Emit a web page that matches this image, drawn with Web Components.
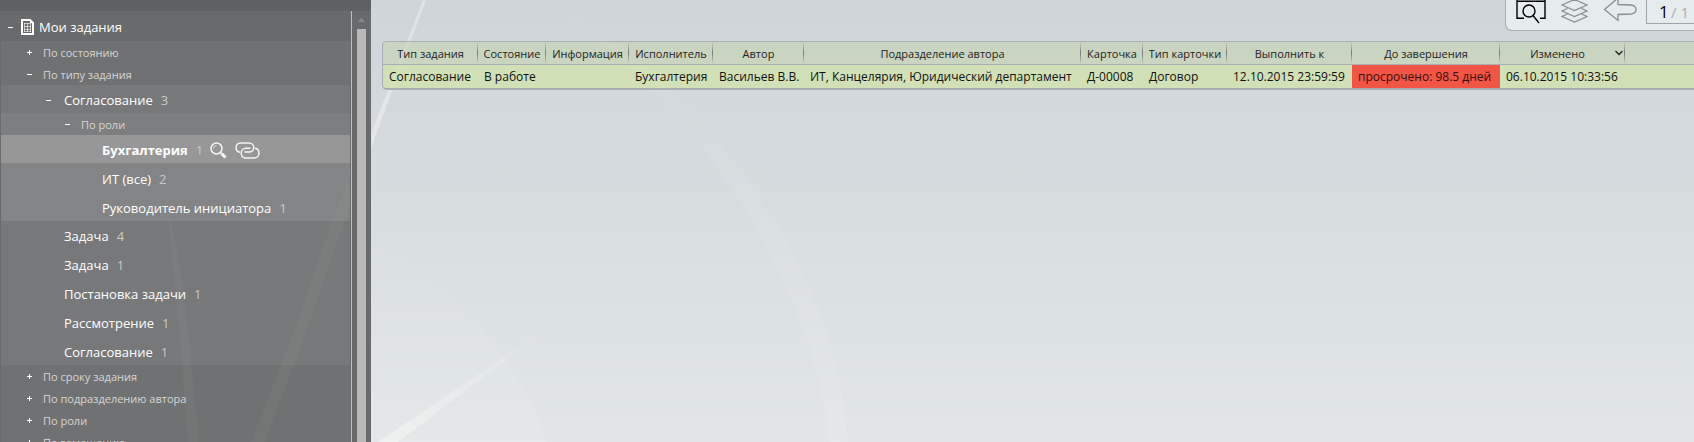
<!DOCTYPE html>
<html lang="ru">
<head>
<meta charset="utf-8">
<title>Мои задания</title>
<style>
  body {
    margin: 0;
    height: 100vh;
    overflow: hidden;
    font-family: "Open Sans", "Noto Sans", sans-serif;
    font-size: 13px;
  }
  tree-item[leaf] + tree-item[leaf] {
    margin-top: 1px;
  }
</style>
</head>
<body>
<task-app>
  <task-sidebar slot="sidebar">
    <tree-item label="Мои задания" icon open>
      <tree-item label="По состоянию" group></tree-item>
      <tree-item label="По типу задания" group open>
        <tree-item label="Согласование" count="3" open>
          <tree-item label="По роли" group open>
            <tree-item label="Бухгалтерия" count="1" leaf selected></tree-item>
            <tree-item label="ИТ (все)" count="2" leaf></tree-item>
            <tree-item label="Руководитель инициатора" count="1" leaf></tree-item>
          </tree-item>
        </tree-item>
        <tree-item label="Задача" count="4" leaf></tree-item>
        <tree-item label="Задача" count="1" leaf></tree-item>
        <tree-item label="Постановка задачи" count="1" leaf></tree-item>
        <tree-item label="Рассмотрение" count="1" leaf></tree-item>
        <tree-item label="Согласование" count="1" leaf></tree-item>
      </tree-item>
      <tree-item label="По сроку задания" group></tree-item>
      <tree-item label="По подразделению автора" group></tree-item>
      <tree-item label="По роли" group></tree-item>
      <tree-item label="По замещению" group></tree-item>
    </tree-item>
  </task-sidebar>
  <view-toolbar slot="toolbar" page="1" pages="1"></view-toolbar>
  <task-table></task-table>
</task-app>

<script>
const define = (name, html, setup) => {
  const template = document.createElement('template');
  template.innerHTML = html;
  customElements.define(name, class extends HTMLElement {
    constructor() {
      super();
      this.attachShadow({mode: 'open'});
      this.shadowRoot.appendChild(template.content.cloneNode(true));
    }

    connectedCallback() {
      if(setup && !this.ready)
        setup(this, this.shadowRoot);
      this.ready = true;
    }
  });
};

define('task-app', `
  <style>
    :host {
      display: flex;
      position: relative;
      height: 100%;
      overflow: hidden;
      background: linear-gradient(#cfd5d9, #d7dcdf 45%, #e2e6e6);
    }
    .backdrop {
      position: absolute;
      width: 100%;
      height: 100%;
    }
    main {
      flex: 1;
      min-width: 0;
      position: relative;
      display: flex;
      flex-direction: column;
      gap: 10px;
      padding-left: 11px;
    }
  </style>
  <svg class="backdrop" viewBox="0 0 1694 442" preserveAspectRatio="none" aria-hidden="true">
    <defs>
      <linearGradient id="ray" x1="0" y1="1" x2="1" y2="0">
        <stop offset="0" stop-color="#fff" stop-opacity=".4"/>
        <stop offset="1" stop-color="#fff" stop-opacity="0"/>
      </linearGradient>
      <linearGradient id="arc" x1="0" y1="0" x2="0" y2="1">
        <stop offset="0" stop-color="#fff" stop-opacity=".02"/>
        <stop offset="1" stop-color="#fff" stop-opacity=".1"/>
      </linearGradient>
    </defs>
    <path d="M426 0L371 148V134L423 0z" fill="#fff" opacity=".35"/>
    <path d="M371 241C455 285 520 360 546 442H371z" fill="url(#arc)"/>
    <path d="M545 0C700 75 840 270 847 442H830C815 290 700 100 545 0z" fill="url(#arc)"/>
    <path d="M378 442L556 322L398 442z" fill="url(#ray)"/>
  </svg>
  <slot name="sidebar"></slot>
  <main>
    <slot name="toolbar"></slot>
    <slot></slot>
  </main>
`);

define('task-sidebar', `
  <style>
    :host {
      position: relative;
      display: flex;
      flex-direction: column;
      flex: 0 0 371px;
      box-sizing: border-box;
      background: #696a6b;
      color: #fff;
    }
    .cap {
      flex: 0 0 11px;
      background: #606163;
    }
    .body {
      flex: 1;
      min-height: 0;
      display: flex;
    }
    nav {
      position: relative;
      flex: 1;
      min-width: 0;
      overflow: hidden;
      padding: 0 1px;
      border-right: 1px solid #c0c0c0;
    }
    .rays {
      position: absolute;
      left: 0;
      top: 0;
      width: 100%;
      height: 100%;
      pointer-events: none;
    }
    .scroll {
      flex: 0 0 19px;
      display: flex;
      flex-direction: column;
      align-items: center;
      gap: 7px;
      padding-top: 7px;
    }
    .scroll svg {
      flex: none;
    }
    .thumb {
      flex: 1;
      width: 9px;
      background: #b9b9b9;
    }
  </style>
  <div class="cap"></div>
  <div class="body">
    <nav>
      <svg class="rays" viewBox="0 0 351 431" preserveAspectRatio="none" aria-hidden="true">
        <g fill="#dfe6d8" opacity=".04">
          <path d="M164 170L178 300L188 431H199L184 280z"/>
          <path d="M348 165L298 310L251 431H265L310 310L351 190z"/>
        </g>
      </svg>
      <slot></slot>
    </nav>
    <div class="scroll">
      <svg width="7" height="4"><path d="M0 4L3 0h1l3 4z" fill="#858687"/></svg>
      <div class="thumb"></div>
    </div>
  </div>
`);

define('tree-item', `
  <style>
    :host {
      display: block;
    }
    .row {
      display: flex;
      align-items: center;
      box-sizing: border-box;
      height: 28px;
      padding-top: 2px;
      padding-left: calc(7px + var(--depth) * 19px);
      white-space: nowrap;
    }
    button {
      display: block;
      flex: none;
      padding: 0;
      border: 0;
      background: none;
      color: inherit;
    }
    svg {
      display: block;
      fill: none;
      stroke: currentColor;
    }
    .toggle {
      width: 5px;
      margin-right: 13px;
    }
    a {
      color: inherit;
      text-decoration: none;
    }
    .count {
      margin-left: 8px;
      color: #c9c9c9;
    }
    .page, .actions {
      display: none;
    }
    .children {
      background: rgba(255, 255, 255, .05);
    }
    :host([leaf]) .toggle {
      visibility: hidden;
    }
    :host([group]) .row {
      height: 22px;
      padding-top: 0;
      font-size: 11px;
      color: #d6d6d6;
    }
    :host([group]) .toggle {
      margin-right: 11px;
      color: #fff;
    }
    :host([icon]) .row {
      height: 30px;
    }
    :host([icon]) .toggle {
      margin-right: 8px;
    }
    :host([icon]) .page {
      display: block;
      margin-right: 5px;
    }
    :host([selected]) .row {
      background: #979797;
    }
    :host([selected]) a {
      font-weight: bold;
    }
    :host([selected]) .actions {
      display: flex;
      gap: 8px;
      margin-left: 7px;
      color: #f4f4f4;
    }
    :host([open]) .bar {
      display: none;
    }
  </style>
  <div class="row">
    <button class="toggle" type="button" aria-label="Развернуть">
      <svg width="5" height="5"><path d="M0 2.5h5"/><path class="bar" d="M2.5 0v5"/></svg>
    </button>
    <svg class="page" width="13" height="16" viewBox="0 0 13 16">
      <path d="M1 1H9L12 4V15H1z" stroke-width="2"/>
      <path d="M9 0L13 4H9z" fill="#fff" stroke="none"/>
      <path d="M3 4.500h7M3 7.500h7M3 10.500h7M3 12.500h7M3.500 4v9M6.500 4v9M9.500 4v9" stroke-opacity=".6"/>
    </svg>
    <a href="#"></a>
    <span class="count"></span>
    <span class="actions">
      <button type="button" aria-label="Поиск">
        <svg width="17" height="17" viewBox="0 0 17 17">
          <circle cx="6.5" cy="6.5" r="5.5" stroke-width="1.5"/>
          <path d="M3.5 6.5a3 3 0 0 1 3-3" stroke-opacity=".7"/>
          <path d="M10.5 10.5l1 1" stroke-width="1.5"/>
          <path d="M11.5 11.5l4 4" stroke-width="3"/>
        </svg>
      </button>
      <button type="button" aria-label="Ссылка">
        <svg width="25" height="17" viewBox="0 0 25 17" stroke-width="1.5">
          <path d="M5 10.3C2.5 9.8 1 8 1 5.7C1 3 3 1 5.8 1H14C16.8 1 18.8 3 18.8 5.5S16.8 10 14 10H9.5"/>
          <path d="M20 6.3C22.5 6.7 24 8.7 24 11C24 13.8 22 16 19.2 16H11C8.2 16 6.2 14 6.2 11.2S8.2 6.3 11 6.3H15.5"/>
        </svg>
      </button>
    </span>
  </div>
  <div class="children"><slot></slot></div>
`, (host, root) => {
  let depth = 0;
  for(let el = host.parentElement; el && el.localName === 'tree-item'; el = el.parentElement)
    depth++;
  host.style.setProperty('--depth', depth);
  root.querySelector('a').textContent = host.getAttribute('label');
  root.querySelector('.count').textContent = host.getAttribute('count') || '';
});

define('view-toolbar', `
  <style>
    :host {
      align-self: flex-end;
      display: flex;
      align-items: flex-start;
      box-sizing: border-box;
      width: 189px;
      height: 31px;
      padding-left: 10px;
      overflow: hidden;
      border: 1px solid #a9abad;
      border-width: 0 0 1px 1px;
      border-bottom-left-radius: 7px;
      background: rgba(240, 243, 246, .7);
    }
    button {
      flex: none;
      padding: 0;
      margin-right: 15px;
      border: 0;
      background: none;
      color: #8b8d8f;
    }
    button:first-of-type {
      color: #000;
    }
    button:last-of-type {
      margin-right: 9px;
    }
    svg {
      display: block;
      fill: none;
      stroke: currentColor;
    }
    label {
      flex: 1;
      display: flex;
      align-items: center;
      box-sizing: border-box;
      height: 24px;
      padding-left: 12px;
      border: 1px solid #a0a4a8;
      border-width: 0 0 1px 1px;
      color: #a9adb0;
      font-size: 15px;
      line-height: 20px;
      white-space: pre;
    }
    input {
      width: 10px;
      padding: 0;
      margin-right: 2px;
      border: 0;
      background: none;
      color: #000;
      font: inherit;
      font-size: 17px;
    }
  </style>
  <button type="button" aria-label="Просмотр">
    <svg width="30" height="24" viewBox="0 0 30 24" stroke-width="1.4">
      <path d="M1 0V18.3H8M29 0V18.3H24M1 1.3H29"/>
      <circle cx="13" cy="11" r="6"/>
      <path d="M17 15.500L23 23"/>
    </svg>
  </button>
  <button type="button" aria-label="Слои">
    <svg width="27" height="24" viewBox="0 0 27 24" stroke-width="1.2">
      <path d="M1 5L13.5 10.500L26 5L13.5 -.5z"/>
      <path d="M6.500 8.500L1 11L13.5 16.500L26 11L20.5 8.500"/>
      <path d="M6.500 14L1 16.500L13.5 22L26 16.500L20.5 14"/>
    </svg>
  </button>
  <button type="button" aria-label="Назад">
    <svg width="34" height="24" viewBox="0 0 34 24" stroke-width="1.3">
      <path d="M15 -2L1.500 9.500L15 20.500V14.500L28 14C31.500 13.500 33 11.500 33 9.500S31.500 5.500 28 5L15 4.500z"/>
    </svg>
  </button>
  <label><input type="text" aria-label="Страница"><span></span></label>
`, (host, root) => {
  root.querySelector('input').value = host.getAttribute('page');
  root.querySelector('span').textContent = '/ ' + host.getAttribute('pages');
});

define('task-table', `
  <style>
    :host {
      display: block;
      border: 1px solid #a9adb6;
      border-width: 1px 0 2px 1px;
      border-radius: 5px 0 0 5px;
      overflow: hidden;
    }
    table {
      width: 100%;
      table-layout: fixed;
      border-collapse: separate;
      border-spacing: 0;
      white-space: nowrap;
      color: #111;
    }
    th, td {
      box-sizing: border-box;
      height: 23px;
      padding: 0;
    }
    th {
      border-bottom: 1px solid #a9adb6;
      background: linear-gradient(transparent, #77787b 50%, transparent) right / 1px 100% no-repeat, rgba(200, 212, 182, .7);
      font-size: 11px;
      font-weight: normal;
      color: #222;
    }
    th:last-child {
      background: rgba(200, 212, 182, .7);
    }
    td {
      padding-left: 6px;
      background: rgba(210, 226, 174, .8);
      font-size: 12px;
    }
    .late {
      background: #f05545;
      color: #3a0d08;
    }
    .sorted {
      display: flex;
      align-items: center;
      padding-right: 2px;
    }
    .sorted span {
      flex: 1;
    }
    .sorted svg {
      flex: none;
      fill: none;
      stroke: #222;
      stroke-width: 1.3;
    }
  </style>
  <table>
    <colgroup>
      <col style="width: 95px"><col style="width: 68px"><col style="width: 83px">
      <col style="width: 84px"><col style="width: 91px"><col style="width: 277px">
      <col style="width: 62px"><col style="width: 84px"><col style="width: 125px">
      <col style="width: 148px"><col style="width: 125px"><col>
    </colgroup>
    <thead>
      <tr>
        <th>Тип задания</th>
        <th>Состояние</th>
        <th>Информация</th>
        <th>Исполнитель</th>
        <th>Автор</th>
        <th>Подразделение автора</th>
        <th>Карточка</th>
        <th>Тип карточки</th>
        <th>Выполнить к</th>
        <th>До завершения</th>
        <th aria-sort="descending"><div class="sorted"><span>Изменено</span><svg width="8" height="6"><path d="M.5 1L4 4.500L7.500 1"/></svg></div></th>
        <th></th>
      </tr>
    </thead>
    <tbody>
      <tr>
        <td>Согласование</td>
        <td>В работе</td>
        <td></td>
        <td>Бухгалтерия</td>
        <td>Васильев В.В.</td>
        <td>ИТ, Канцелярия, Юридический департамент</td>
        <td>Д-00008</td>
        <td>Договор</td>
        <td>12.10.2015 23:59:59</td>
        <td class="late">просрочено: 98.5 дней</td>
        <td>06.10.2015 10:33:56</td>
        <td></td>
      </tr>
    </tbody>
  </table>
`);
</script>
</body>
</html>
